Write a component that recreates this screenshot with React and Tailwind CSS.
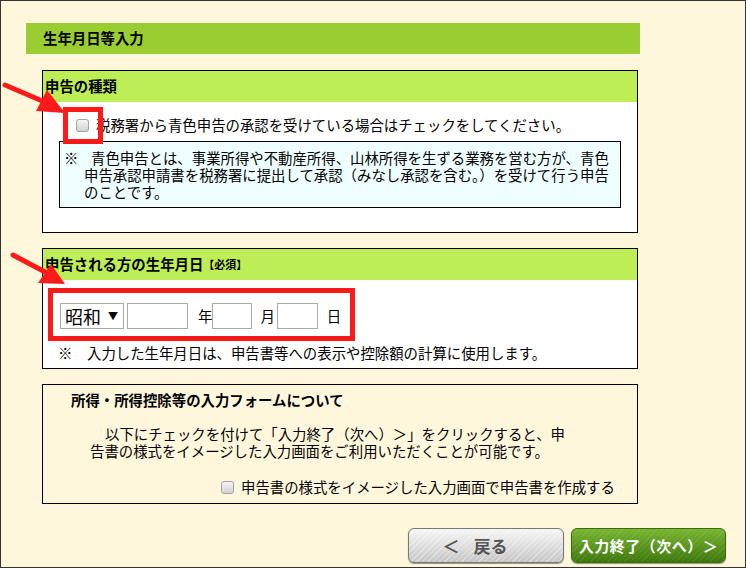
import React from "react";

function Check() {
  return (
    <span className="inline-block w-[13px] h-[13px] rounded-[3px] border border-[#a3a3a3] bg-gradient-to-b from-[#f6f6f6] to-[#d2d2d2] shrink-0" />
  );
}

export default function App() {
  return (
    <div className="relative w-[746px] h-[568px] overflow-hidden border border-[#333] bg-[#fff7dc] text-black text-[14.4px] [font-family:'Noto_Sans_CJK_JP','Noto_Sans',sans-serif]">
      <div className="pl-[25px] pt-[22px]">
        {/* Title bar */}
        <div className="w-[614px] h-[31px] bg-[#9acd32] flex items-center pl-[17px] font-bold leading-none">
          生年月日等入力
        </div>

        <div className="ml-[16px] w-[596px] mt-[16px] flex flex-col gap-[15px]">
          {/* Section 1 */}
          <div className="border border-black bg-white">
            <div className="h-[31px] bg-[#bdee55] flex items-center pl-[2px] font-bold leading-none">
              申告の種類
            </div>
            <div className="pt-[13px] pl-[33px] flex items-center h-[33px] leading-[20px]">
              <Check />
              <span className="ml-[7px]">税務署から青色申告の承認を受けている場合はチェックをしてください。</span>
            </div>
            <div className="ml-[16px] mt-[6px] mb-[24px] w-[562px] border border-black bg-[#efffff] pt-[7px] pb-[7px] pl-[4px] flex leading-[17px]">
              <span className="w-[20px] shrink-0">※</span>
              <span className="indent-[7px] whitespace-nowrap">
                青色申告とは、事業所得や不動産所得、山林所得を生ずる業務を営む方が、青色<br />
                申告承認申請書を税務署に提出して承認（みなし承認を含む。）を受けて行う申告<br />
                のことです。
              </span>
            </div>
          </div>

          {/* Section 2 */}
          <div className="border border-black bg-white">
            <div className="h-[31px] bg-[#bdee55] flex items-center pl-[2px] font-bold leading-none">
              申告される方の生年月日<span className="text-[11px]">【必須】</span>
            </div>
            <div className="mt-[8px] ml-[5px] w-[307px] border-[5px] border-[#ff1a1a] pt-[10px] pb-[7px] pl-[7px] flex items-center">
              <div className="w-[64px] h-[26px] border border-[#a9a9a9] bg-white flex items-center pl-[4px] text-[18px] leading-none">
                <span>昭和</span>
                <span className="ml-[7px] text-[10px]">▼</span>
              </div>
              <div className="ml-[3px] w-[61px] h-[26px] border border-[#a9a9a9] bg-white" />
              <span className="ml-[10px] leading-none">年</span>
              <div className="w-[40px] h-[26px] border border-[#a9a9a9] bg-white" />
              <span className="ml-[8px] leading-none">月</span>
              <div className="ml-[2px] w-[41px] h-[26px] border border-[#a9a9a9] bg-white" />
              <span className="ml-[9px] leading-none">日</span>
            </div>
            <div className="mt-[2px] pb-[5px] pl-[15px] flex leading-[20px]">
              <span className="w-[29px] shrink-0">※</span>
              <span>入力した生年月日は、申告書等への表示や控除額の計算に使用します。</span>
            </div>
          </div>

          {/* Section 3 */}
          <div className="border border-black">
            <div className="pt-[5px] pl-[28px] font-bold leading-[20px]">
              所得・所得控除等の入力フォームについて
            </div>
            <div className="mt-[15px] ml-[47px] leading-[17px] indent-[15px]">
              以下にチェックを付けて「入力終了（次へ）＞」をクリックすると、申<br />
              告書の様式をイメージした入力画面をご利用いただくことが可能です。
            </div>
            <div className="mt-[18px] pb-[6px] pl-[178px] flex items-center leading-[20px]">
              <Check />
              <span className="ml-[7px]">申告書の様式をイメージした入力画面で申告書を作成する</span>
            </div>
          </div>
        </div>

        {/* Buttons */}
        <div className="mt-[24px] flex justify-end pr-[19px] gap-[7px]">
          <div className="w-[156px] h-[35px] rounded-[6px] border border-[#777] shadow-[0_1px_1px_rgba(0,0,0,0.4)] bg-[repeating-linear-gradient(135deg,rgba(255,255,255,0.35)_0px,rgba(255,255,255,0.35)_1px,transparent_1px,transparent_4px),linear-gradient(#f6f6f6,#c6c6c6)] flex items-center justify-center pr-[22px] text-[#555] font-bold text-[17px] leading-none">
            <span>＜</span>
            <span className="ml-[14px]">戻る</span>
          </div>
          <div className="w-[155px] h-[35px] rounded-[6px] border border-[#3b6a0e] shadow-[0_1px_1px_rgba(0,0,0,0.4)] bg-[repeating-linear-gradient(135deg,rgba(255,255,255,0.08)_0px,rgba(255,255,255,0.08)_1px,transparent_1px,transparent_4px),linear-gradient(#78b532,#3e780c)] flex items-center justify-center text-white font-bold text-[15px] leading-none tracking-[0.5px]">
            入力終了（次へ）＞
          </div>
        </div>
      </div>

      {/* Overlay: red highlight around first checkbox */}
      <div className="absolute left-[62px] top-[106px] w-[40px] h-[37px] border-[5px] border-[#ff1a1a] pointer-events-none" />

      {/* Overlay: arrows */}
      <svg className="absolute left-0 top-0 pointer-events-none" width="746" height="568" viewBox="0 0 746 568">
        <line x1="4" y1="84" x2="46" y2="102" stroke="#ff1a1a" strokeWidth="5" strokeLinecap="round" />
        <polygon points="64,112 35,110 46,89" fill="#ff1a1a" />
        <line x1="12" y1="254" x2="46" y2="272" stroke="#ff1a1a" strokeWidth="5" strokeLinecap="round" />
        <polygon points="64,283 37,282 50,263" fill="#ff1a1a" />
      </svg>
    </div>
  );
}
